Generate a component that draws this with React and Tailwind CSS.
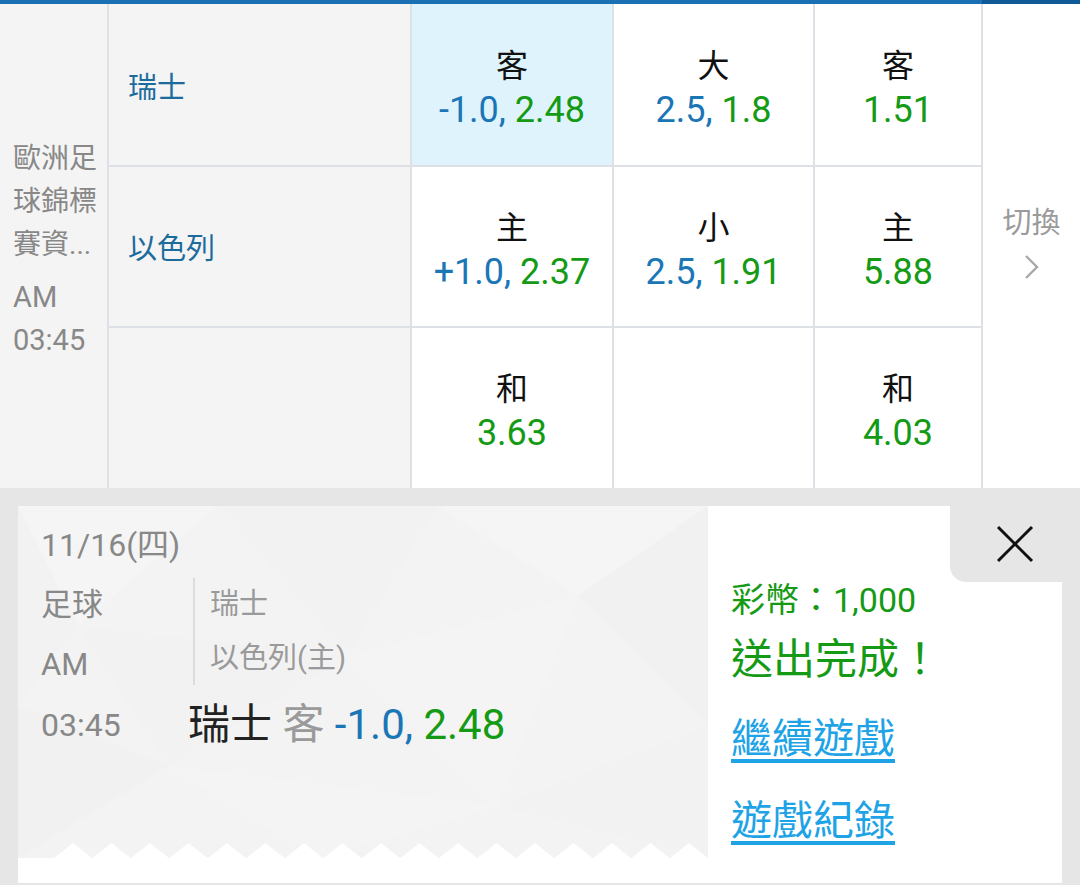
import React from "react";

const FONT = "font-['Roboto','Noto_Sans_CJK_TC',sans-serif]";

function OddCell({ label, a, b, bg = "bg-white" }) {
  return (
    <div className={`${bg} flex flex-col items-center justify-center pt-[6px]`}>
      {label && <div className="text-[32px] leading-[44px] text-[#111]">{label}</div>}
      {(a || b) && (
        <div className="text-[36px] leading-[44px]">
          {a && <span className="text-[#1b76b6]">{a}, </span>}
          <span className="text-[#149a14]">{b}</span>
        </div>
      )}
    </div>
  );
}

function Texture() {
  return (
    <svg className="absolute inset-0 w-full h-full" viewBox="0 0 690 352" preserveAspectRatio="none">
      <rect width="690" height="352" fill="#f3f3f3" />
      <polygon points="0,0 200,0 60,120" fill="#f5f5f5" />
      <polygon points="200,0 420,0 330,150" fill="#f2f2f2" />
      <polygon points="420,0 690,0 560,90" fill="#f5f5f5" />
      <polygon points="560,90 690,0 690,220" fill="#f1f1f1" />
      <polygon points="60,120 330,150 150,260" fill="#f2f2f2" />
      <polygon points="330,150 560,90 480,300" fill="#f4f4f4" />
      <polygon points="0,200 150,260 0,352" fill="#f1f1f1" />
      <polygon points="150,260 480,300 300,352" fill="#f4f4f4" />
      <polygon points="480,300 690,220 690,352" fill="#f2f2f2" />
      <polygon points="0,0 60,120 0,200" fill="#f2f2f2" />
    </svg>
  );
}

function Zigzag() {
  const tris = [];
  for (let i = 0; i < 20; i++) {
    const x = 55 + i * 38.5;
    tris.push(`${x - 19},16 ${x},1 ${x + 19},16`);
  }
  return (
    <svg className="absolute left-0 bottom-0 w-full h-[16px]" viewBox="0 0 690 16" preserveAspectRatio="none">
      {tris.map((p, i) => (
        <polygon key={i} points={p} fill="#ffffff" />
      ))}
    </svg>
  );
}

export default function App() {
  return (
    <div className={`w-[1080px] h-[885px] bg-[#e6e6e6] overflow-hidden ${FONT}`}>
      {/* top blue bar */}
      <div className="flex h-[4px]">
        <div className="w-[982px] bg-[#1b6fb3]" />
        <div className="flex-1 bg-[#0f5997]" />
      </div>

      {/* odds table */}
      <div className="grid grid-cols-[107px_301px_200px_199px_166px_1fr] grid-rows-[161px_159px_160px] gap-[2px] bg-[#dde1e6]">
        <div className="row-span-3 bg-[#f4f4f4] flex flex-col justify-center pl-[13px] pt-[6px] text-[28px] leading-[43px] text-[#888]">
          <div>歐洲足</div>
          <div>球錦標</div>
          <div>賽資...</div>
          <div className="mt-[10px] text-[29px]">AM</div>
          <div className="text-[29px]">03:45</div>
        </div>
        <div className="bg-[#f4f4f4] flex items-center pl-[19px] pt-[8px] text-[29px] text-[#1c6b9d]">瑞士</div>
        <OddCell label="客" a="-1.0" b="2.48" bg="bg-[#dff3fd]" />
        <OddCell label="大" a="2.5" b="1.8" />
        <OddCell label="客" b="1.51" />
        <div className="row-span-3 bg-white flex flex-col items-center justify-center pb-[8px]">
          <div className="text-[29px] leading-[40px] text-[#9a9a9a]">切換</div>
          <svg width="18" height="28" viewBox="0 0 18 28" className="mt-[10px]">
            <polyline points="3,3 14,14 3,25" fill="none" stroke="#a8a8a8" strokeWidth="2.4" />
          </svg>
        </div>

        <div className="bg-[#f4f4f4] flex items-center pl-[19px] pt-[6px] text-[29px] text-[#1c6b9d]">以色列</div>
        <OddCell label="主" a="+1.0" b="2.37" />
        <OddCell label="小" a="2.5" b="1.91" />
        <OddCell label="主" b="5.88" />

        <div className="bg-[#f4f4f4]" />
        <OddCell label="和" b="3.63" />
        <div className="bg-white" />
        <OddCell label="和" b="4.03" />
      </div>

      {/* result panel */}
      <div className="pt-[18px] px-[18px]">
        <div className="relative h-[377px] bg-white flex">
          {/* left ticket */}
          <div className="relative w-[690px] h-[352px]">
            <Texture />
            <Zigzag />
            <div className="relative pl-[23px] pt-[9px]">
              <div className="text-[32px] leading-[60px] text-[#888]">11/16(四)</div>
              <div className="flex">
                <div className="w-[147px] text-[31px] leading-[60px] text-[#888]">
                  <div>足球</div>
                  <div>AM</div>
                  <div className="text-[32px]">03:45</div>
                </div>
                <div>
                  <div className="ml-[5px] mt-[3px] border-l-2 border-[#dcdcdc] pl-[15px] text-[29px] text-[#9a9a9a]">
                    <div className="leading-[53px]">瑞士</div>
                    <div className="leading-[54px]">以色列(主)</div>
                  </div>
                  <div className="mt-[10px] text-[42px] leading-[60px] whitespace-nowrap">
                    <span className="text-[#222]">瑞士 </span>
                    <span className="text-[#9a9a9a]">客 </span>
                    <span className="text-[#1b76b6]">-1.0, </span>
                    <span className="text-[#149a14]">2.48</span>
                  </div>
                </div>
              </div>
            </div>
          </div>

          {/* right result */}
          <div className="flex-1 pl-[23px] pt-[74px]">
            <div className="text-[34px] leading-[40px] text-[#149a14]">彩幣：1,000</div>
            <div className="mt-[12px] text-[42px] leading-[56px] text-[#149a14]">送出完成！</div>
            <div className="mt-[23px] text-[41px] leading-[56px] text-[#1ea3e6] underline decoration-[4px] underline-offset-[6px]">
              繼續遊戲
            </div>
            <div className="mt-[26px] text-[41px] leading-[56px] text-[#1ea3e6] underline decoration-[4px] underline-offset-[6px]">
              遊戲紀錄
            </div>
          </div>

          {/* close tab */}
          <div className="absolute top-0 right-[-18px] w-[130px] h-[76px] bg-[#e6e6e6] rounded-bl-[16px] flex items-center justify-center">
            <svg width="38" height="38" viewBox="0 0 38 38">
              <line x1="2" y1="2" x2="36" y2="36" stroke="#111" strokeWidth="3" />
              <line x1="36" y1="2" x2="2" y2="36" stroke="#111" strokeWidth="3" />
            </svg>
          </div>
        </div>
      </div>
    </div>
  );
}
